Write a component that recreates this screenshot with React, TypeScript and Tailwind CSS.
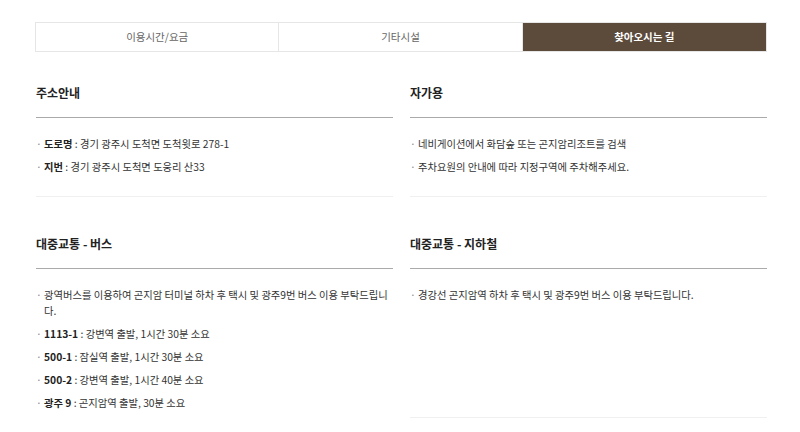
import React from 'react';

type Item = { label?: string; text: string };

const sections: { title: string; items: Item[]; minH?: string }[][] = [
  [
    {
      title: '주소안내',
      items: [
        { label: '도로명', text: '경기 광주시 도척면 도척윗로 278-1' },
        { label: '지번', text: '경기 광주시 도척면 도웅리 산33' },
      ],
    },
    {
      title: '자가용',
      items: [
        { text: '네비게이션에서 화담숲 또는 곤지암리조트를 검색' },
        { text: '주차요원의 안내에 따라 지정구역에 주차해주세요.' },
      ],
    },
  ],
  [
    {
      title: '대중교통 - 버스',
      items: [
        { text: '광역버스를 이용하여 곤지암 터미널 하차 후 택시 및 광주9번 버스 이용 부탁드립니다.' },
        { label: '1113-1', text: '강변역 출발, 1시간 30분 소요' },
        { label: '500-1', text: '잠실역 출발, 1시간 30분 소요' },
        { label: '500-2', text: '강변역 출발, 1시간 40분 소요' },
        { label: '광주 9', text: '곤지암역 출발, 30분 소요' },
      ],
    },
    {
      title: '대중교통 - 지하철',
      items: [{ text: '경강선 곤지암역 하차 후 택시 및 광주9번 버스 이용 부탁드립니다.' }],
      minH: 'min-h-[149px]',
    },
  ],
];

const tabs = ['이용시간/요금', '기타시설', '찾아오시는 길'];

const Section = ({ title, items, minH }: { title: string; items: Item[]; minH?: string }) => (
  <div>
    <h3 className="border-b border-[#aaaaaa] pb-[14px] text-[12px] font-bold leading-[20px] text-[#222]">
      {title}
    </h3>
    <ul className={`flex flex-col gap-[7px] border-b border-[#f0f0f0] pt-[18px] pb-[21px] ${minH ?? ''}`}>
      {items.map((it, i) => (
        <li key={i} className="flex text-[10.3px] leading-[16px] text-[#333]">
          <span className="w-[8px] shrink-0 text-[#888]">·</span>
          <span>
            {it.label && <b className="font-bold text-[#222]">{it.label}</b>}
            {it.label && ' : '}
            {it.text}
          </span>
        </li>
      ))}
    </ul>
  </div>
);

export default function App() {
  return (
    <div
      className="min-h-[432px] bg-white pt-[22px]"
      style={{ fontFamily: '"Noto Sans CJK KR", "Noto Sans", sans-serif' }}
    >
      <div className="ml-[35px] w-[732px]">
        <div className="grid grid-cols-3 border border-[#e6e6e6]">
          {tabs.map((t, i) => (
            <div
              key={t}
              className={
                i === 2
                  ? 'flex h-[28px] items-center justify-center bg-[#5c4a3b] text-[10.5px] font-bold text-white'
                  : 'flex h-[28px] items-center justify-center border-r border-[#e6e6e6] text-[10.5px] text-[#666]'
              }
            >
              {t}
            </div>
          ))}
        </div>
        <div className="flex flex-col gap-[37px] pt-[31px] pl-px">
          {sections.map((row, r) => (
            <div key={r} className="grid grid-cols-2 items-start gap-x-[17px]">
              {row.map((s) => (
                <Section key={s.title} {...s} />
              ))}
            </div>
          ))}
        </div>
      </div>
    </div>
  );
}
